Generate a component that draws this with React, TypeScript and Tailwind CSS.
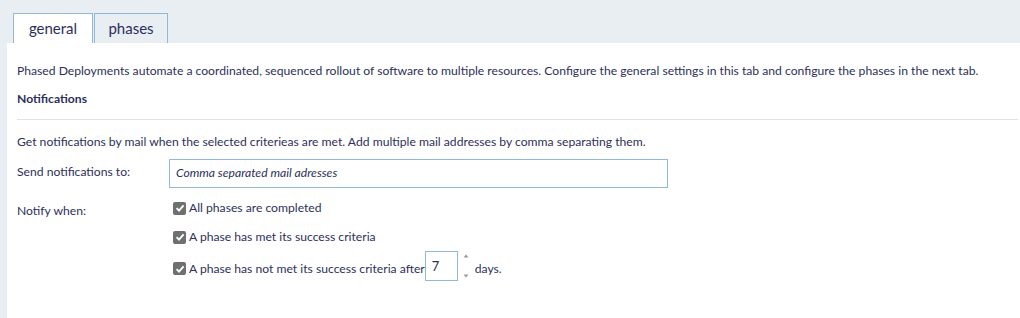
import React from 'react';

const font = { fontFamily: 'Lato, "Liberation Sans", sans-serif' };

const Check: React.FC = () => (
  <span className="inline-flex h-[13px] w-[13px] shrink-0 items-center justify-center rounded-[2px] bg-[#6f6f6f]">
    <svg width="10" height="10" viewBox="0 0 10 10">
      <path d="M1.6 5.2 L4 7.6 L8.6 2.4" fill="none" stroke="#fff" strokeWidth="1.9" />
    </svg>
  </span>
);

const App: React.FC = () => {
  return (
    <div
      className="flex h-[318px] w-[1020px] flex-col bg-[#e9eef2] pl-[7px] pt-[13px] text-[12.15px] text-[#2c2f5a]"
      style={font}
    >
      <div className="flex gap-[1px] pl-[6px]">
        <div className="flex h-[30px] w-[80px] items-center justify-center border border-b-0 border-[#8fb8d9] bg-white text-[15px]">
          general
        </div>
        <div className="flex h-[30px] w-[74px] items-center justify-center border border-b-0 border-[#8fb8d9] text-[15px]">
          phases
        </div>
      </div>
      <div className="flex-1 bg-white pl-[10px] pr-[2px] pt-[20px]">
        <p className="leading-[16px]">
          Phased Deployments automate a coordinated, sequenced rollout of software to multiple resources. Configure the
          general settings in this tab and configure the phases in the next tab.
        </p>
        <p className="mt-[12px] font-bold leading-[16px]">Notifications</p>
        <div className="mt-[12px] h-px bg-[#e2e2e2]" />
        <p className="mt-[14px] leading-[16px]">
          Get notifications by mail when the selected criterieas are met. Add multiple mail addresses by comma
          separating them.
        </p>
        <div className="mt-[9px] flex items-center">
          <span className="w-[152px] pb-[4px] leading-[16px]">Send notifications to:</span>
          <div className="flex h-[29px] w-[499px] items-center border border-[#8fb8d9] px-[6px] italic">
            Comma separated mail adresses
          </div>
        </div>
        <div className="mt-[15px] flex">
          <span className="w-[156px] leading-[16px]">Notify when:</span>
          <div className="-mt-[2px] flex flex-col">
            <label className="flex h-[14px] items-center gap-[3px]">
              <Check />
              <span>All phases are completed</span>
            </label>
            <label className="mt-[15px] flex h-[14px] items-center gap-[3px]">
              <Check />
              <span>A phase has met its success criteria</span>
            </label>
            <div className="mt-[7px] flex items-center">
              <label className="mt-[6px] flex items-center gap-[3px]">
                <Check />
                <span>A phase has not met its success criteria after</span>
              </label>
              <span className="flex h-[30px] w-[33px] items-center border border-[#8fb8d9] px-[6px] text-[13px] leading-[16px]">
                7
              </span>
              <span className="ml-[5px] flex h-[30px] flex-col justify-between py-[3px]">
                <svg width="6" height="4" viewBox="0 0 6 4">
                  <path d="M0.5 3.5 L3 0.5 L5.5 3.5 Z" fill="#999" />
                </svg>
                <svg width="6" height="4" viewBox="0 0 6 4">
                  <path d="M0.5 0.5 L3 3.5 L5.5 0.5 Z" fill="#999" />
                </svg>
              </span>
              <span className="ml-[6px] mt-[6px]">days.</span>
            </div>
          </div>
        </div>
      </div>
    </div>
  );
};

export default App;
